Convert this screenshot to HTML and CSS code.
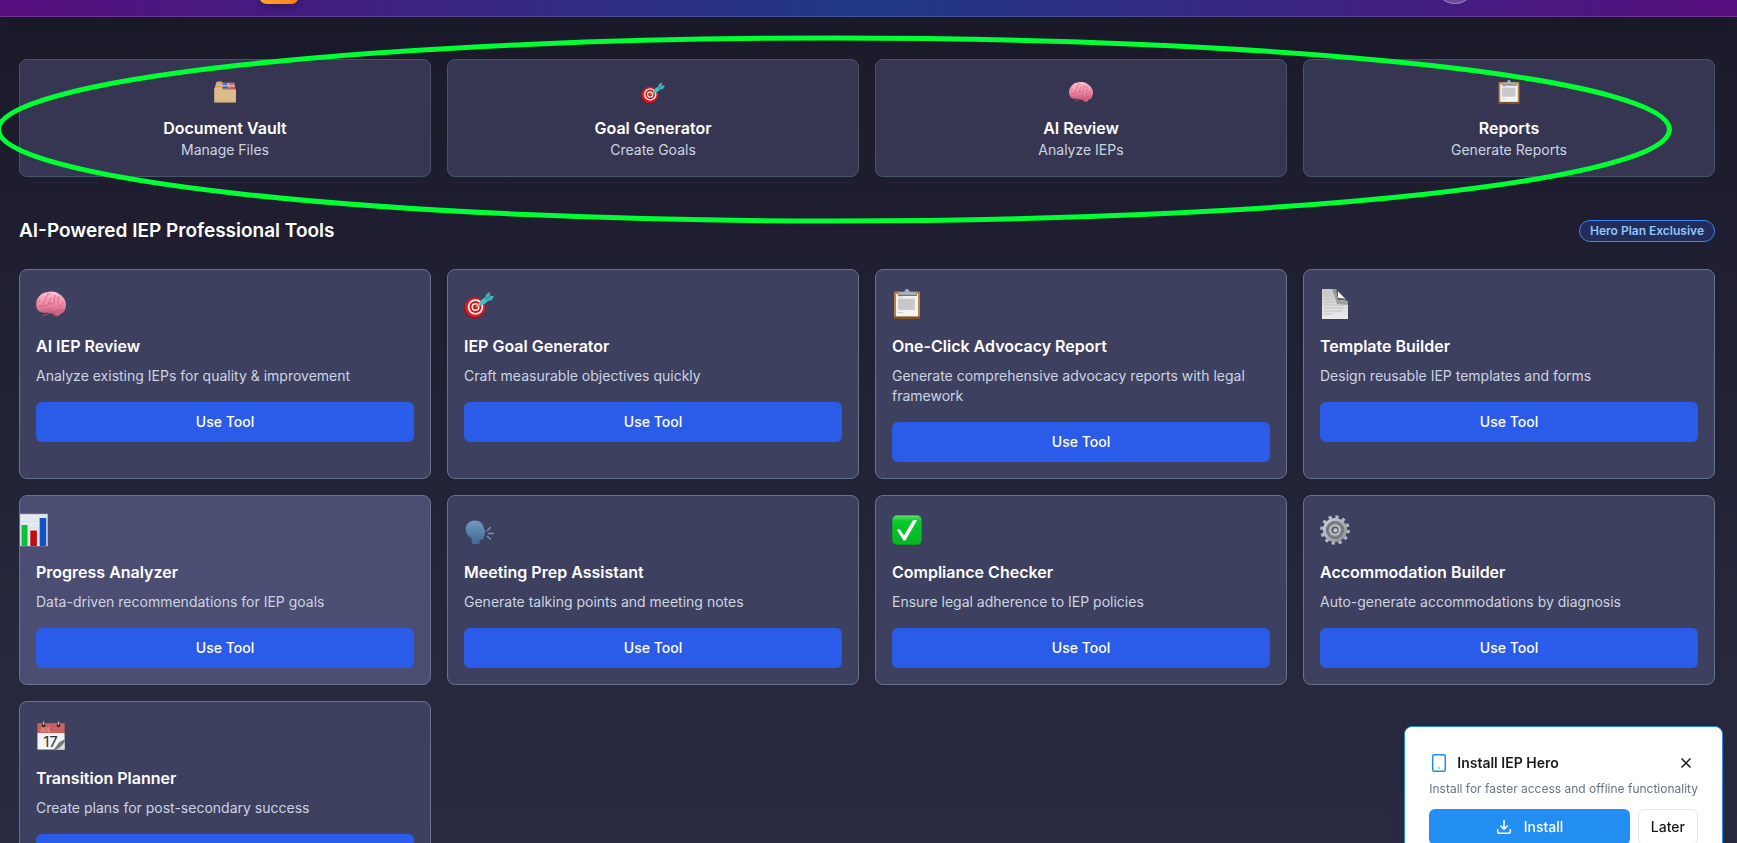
FILE: index.html
```html
<!DOCTYPE html>
<html lang="en">
<head>
<meta charset="utf-8">
<meta name="viewport" content="width=device-width, initial-scale=1">
<title>IEP Hero</title>
<link rel="stylesheet" href="styles.css">
</head>
<body>
<svg class="sprite" aria-hidden="true">
  <defs>
    <linearGradient id="g-brain" x1="0" y1="0" x2="0" y2="1"><stop offset="0" stop-color="#fbbccb"/><stop offset=".55" stop-color="#f08ba8"/><stop offset="1" stop-color="#c85a7a"/></linearGradient>
    <linearGradient id="g-head" x1="0" y1="0" x2="0" y2="1"><stop offset="0" stop-color="#7099bd"/><stop offset="1" stop-color="#416a93"/></linearGradient>
    <linearGradient id="g-check" x1="0" y1="0" x2="0" y2="1"><stop offset="0" stop-color="#5fe070"/><stop offset=".2" stop-color="#06c92c"/><stop offset="1" stop-color="#06b526"/></linearGradient>
    <linearGradient id="g-gear" x1="0" y1="0" x2="1" y2="1"><stop offset="0" stop-color="#c9cdd3"/><stop offset="1" stop-color="#8e9297"/></linearGradient>
    <linearGradient id="g-paper" x1="0" y1="0" x2="0" y2="1"><stop offset="0" stop-color="#c9c9c9"/><stop offset="1" stop-color="#ececec"/></linearGradient>
  </defs>
  <symbol id="brain" viewBox="0 0 30 30">
    <path d="M15 21c1 3 2.500 6.500 5 6.500 3 0 5-1.500 4.500-5z" fill="#b04c62"/>
    <path d="M1 20C-.5 16 0 11.500 2 9c2-3.500 5.500-5.800 9-5.800 4-1.200 9-.6 12 1.800 4 2 6.500 6 7 10 .3 4-1.500 8-4 9.500-2 1-4 .2-6-.5-3 .8-6 .8-8.500-.5C8 24 3 24 1 20z" fill="url(#g-brain)"/>
    <path d="M2 13c2-3 4-3 5-6m0 8c0-3 3-3 3-6s1-3 3-4m0 10c-1-3 2-4 2-6m3 5c0-3 1-4 1-8m3 8c1-2 0-4 0-6m5 6c-1 2-3 3-5 3m5 3c-2 2-5 0-7 2s-5 0-7 2-4 1-6 3M3 17c3-1 6 1 8-1s5-1 7-1m-8 6c2-2 4 0 6-2" fill="none" stroke="#cc5c80" stroke-width=".8" stroke-linecap="round"/>
    <path d="M5 10c1-2 3-4 5-4m7-1c2-.500 3 0 4 1" fill="none" stroke="#ffdbe4" stroke-width="1" stroke-linecap="round"/>
    <path d="M19 24.500h5M19.500 26h4" stroke="#e0899a" stroke-width=".6"/>
  </symbol>
  <symbol id="target" viewBox="0 0 30 30">
    <ellipse cx="10.500" cy="19.500" rx="10.500" ry="10" fill="#8e1013"/>
    <ellipse cx="11" cy="18.500" rx="10.300" ry="10" fill="#d91a1e"/>
    <ellipse cx="11.500" cy="18" rx="7.800" ry="7.800" fill="#f6eeee"/>
    <ellipse cx="11.500" cy="18" rx="6" ry="6" fill="#cf181c"/>
    <ellipse cx="11.500" cy="18" rx="4" ry="4" fill="#f6eeee"/>
    <ellipse cx="11.500" cy="18" rx="2.500" ry="2.500" fill="#cf181c"/>
    <path d="M12 18l5-4" stroke="#d9a441" stroke-width="1.800"/>
    <path d="M15 14.500c.5-2.500 4-5 7-6.500l2.500 3c-2 3-5 5-8.500 5.500z" fill="#3cc3cb"/>
    <path d="M21 9.500L22.500 5 26 3l-.2 3.500 4.200.7-2.500 4-4.500.8z" fill="#43b3bb"/>
    <path d="M21 11l5.500-4.500" stroke="#1b6c78" stroke-width=".8"/>
  </symbol>
  <symbol id="clipboard" viewBox="0 0 30 30">
    <rect x="2" y="2.500" width="26" height="27.500" rx="1.200" fill="#b5843f"/>
    <path d="M2 27.500h26V29a1 1 0 0 1-1 1H3a1 1 0 0 1-1-1z" fill="#7c5226"/>
    <rect x="4" y="5" width="22" height="22.300" fill="#f3f3f3"/>
    <rect x="6" y="9.500" width="17" height="11.500" rx="1" fill="#cbcbcb"/>
    <path d="M6 8h5M6 23.500h5M7 12h13M7 15h15M7 18h12" stroke="#bcbcbc" stroke-width=".7"/>
    <path d="M6 5.500l1-2.500h5.500c.3-1.800 1-3 2.500-3s2.200 1.200 2.500 3H24l1 2.500z" fill="#a9b1bb"/>
    <path d="M6 5.500h19v1.500H6z" fill="#7b7670"/>
  </symbol>
  <symbol id="page" viewBox="0 0 30 30">
    <path d="M2 0h14l12 13v17H2z" fill="url(#g-paper)"/>
    <path d="M4 4h7M4 7h9M4 10h9M4 13h10M4 16h20M4 19h20M4 22h18M4 25h8" stroke="#bdbdbd" stroke-width=".9"/>
    <path d="M12 0h4l2 10 10 3v3l-11-1z" fill="#6f6f6f" opacity=".55"/>
    <path d="M16 0l12 13c-3-2-6-2.500-10-2z" fill="#555"/>
    <path d="M18 2.500L25.500 10c-2.500-1-5-1.200-7.500-1z" fill="#f5f5f5"/>
  </symbol>
  <symbol id="chart" viewBox="0 0 30 30">
    <path d="M2 0h26v30H2z" fill="#b8c2ce"/>
    <path d="M3 1h24v28.500H3z" fill="#e3eaf2"/>
    <path d="M3 7h24M3 13h24M3 19h24M3 25h24" stroke="#cdd8e4" stroke-width=".6"/>
    <path d="M4 10.500h5.500v19H4z" fill="#0cc03a"/>
    <path d="M12 15.500h6v14h-6z" fill="#c40d10"/>
    <path d="M20.500 4h6v25.500h-6z" fill="#1054c2"/>
  </symbol>
  <symbol id="speak" viewBox="0 0 30 30">
    <path d="M10.500 5.500c5.500 0 9 3.500 9.300 7.500l2 4.500-1.500.8.3 2-1 1 .2 2c-.3 1.500-2.500 1.500-4 1.500L15.500 29H8l-.5-6C4 21.500 1.700 18 1.700 14c0-5 4-8.500 8.800-8.500z" fill="url(#g-head)"/>
    <path d="M23.500 15.500l3-3M24.500 18.500h5M23.500 21.500l3 2.500" stroke="#6f94b8" stroke-width="1.500" stroke-linecap="round"/>
  </symbol>
  <symbol id="check" viewBox="0 0 30 30">
    <rect width="30" height="30" rx="5" fill="#089a22"/>
    <rect x=".7" y=".5" width="28.600" height="28.500" rx="4.500" fill="url(#g-check)"/>
    <path d="M5 15c1-1 3-.8 3.700.5l3.300 5L20.500 6c.8-1 3-1.200 4.500-.8L13.500 25.500h-2z" fill="#fff"/>
  </symbol>
  <symbol id="gear" viewBox="0 0 30 30">
    <circle cx="15" cy="15" r="13" fill="none" stroke="#b4b8be" stroke-width="3.600" stroke-dasharray="3.200 3.607"/>
    <circle cx="15" cy="15" r="10.500" fill="none" stroke="url(#g-gear)" stroke-width="3.200"/>
    <circle cx="15" cy="15" r="9" fill="#85888c"/>
    <circle cx="15" cy="15" r="7.600" fill="none" stroke="#6d7074" stroke-width="1"/>
    <circle cx="15" cy="15" r="5.600" fill="#c7cbd0"/>
    <circle cx="15" cy="15" r="3.800" fill="#5d6064"/>
    <circle cx="15.400" cy="15.200" r="2" fill="#c6cad0"/>
  </symbol>
  <symbol id="dividers" viewBox="0 0 30 30">
    <path d="M4 3.500l1.500-1.500h5L12 3.500h14.500l1.500 7H2z" fill="#c9b9a9"/>
    <path d="M5 5l1.500-2.500h4L12 5z" fill="#f2a04a"/>
    <path d="M12 4h6v2h-6zM12 8h7v2h-7z" fill="#3f50e0"/>
    <path d="M20 4h6v2h-6zM20.500 8.500h7v2.500h-7z" fill="#ee4a45"/>
    <path d="M4 7.500h7v2H4z" fill="#e79a3f"/>
    <path d="M1.500 11l1-1.500h8l2 2H28l.7.7V28H1.500z" fill="#dfba8c"/>
    <path d="M1.500 27.500h27.200" stroke="#c49c6b" stroke-width=".8"/>
  </symbol>
</svg>

<header class="topbar">
  <div class="topbar-inner">
    <span class="logo"></span>
    <span class="avatar"></span>
  </div>
</header>

<main class="page">
  <nav class="grid" aria-label="Quick actions">
    <a class="quick" href="#vault"><svg class="emoji-sm"><use href="#dividers"/></svg><span class="name">Document Vault</span><span class="hint">Manage Files</span></a>
    <a class="quick" href="#goals"><svg class="emoji-sm"><use href="#target"/></svg><span class="name">Goal Generator</span><span class="hint">Create Goals</span></a>
    <a class="quick" href="#review"><svg class="emoji-sm"><use href="#brain"/></svg><span class="name">AI Review</span><span class="hint">Analyze IEPs</span></a>
    <a class="quick" href="#reports"><svg class="emoji-sm"><use href="#clipboard"/></svg><span class="name">Reports</span><span class="hint">Generate Reports</span></a>
  </nav>

  <section class="tools">
    <div class="section-head">
      <h2>AI-Powered IEP Professional Tools</h2>
      <span class="badge">Hero Plan Exclusive</span>
    </div>
    <div class="grid">
      <article class="tool"><div class="icon"><svg class="emoji"><use href="#brain"/></svg></div><h3>AI IEP Review</h3><p>Analyze existing IEPs for quality &amp; improvement</p><button type="button" class="use">Use Tool</button></article>
      <article class="tool"><div class="icon"><svg class="emoji"><use href="#target"/></svg></div><h3>IEP Goal Generator</h3><p>Craft measurable objectives quickly</p><button type="button" class="use">Use Tool</button></article>
      <article class="tool"><div class="icon"><svg class="emoji"><use href="#clipboard"/></svg></div><h3>One-Click Advocacy Report</h3><p>Generate comprehensive advocacy reports with legal framework</p><button type="button" class="use">Use Tool</button></article>
      <article class="tool"><div class="icon"><svg class="emoji"><use href="#page"/></svg></div><h3>Template Builder</h3><p>Design reusable IEP templates and forms</p><button type="button" class="use">Use Tool</button></article>
      <article class="tool is-active"><div class="icon"><svg class="emoji"><use href="#chart"/></svg></div><h3>Progress Analyzer</h3><p>Data-driven recommendations for IEP goals</p><button type="button" class="use">Use Tool</button></article>
      <article class="tool"><div class="icon"><svg class="emoji"><use href="#speak"/></svg></div><h3>Meeting Prep Assistant</h3><p>Generate talking points and meeting notes</p><button type="button" class="use">Use Tool</button></article>
      <article class="tool"><div class="icon"><svg class="emoji"><use href="#check"/></svg></div><h3>Compliance Checker</h3><p>Ensure legal adherence to IEP policies</p><button type="button" class="use">Use Tool</button></article>
      <article class="tool"><div class="icon"><svg class="emoji"><use href="#gear"/></svg></div><h3>Accommodation Builder</h3><p>Auto-generate accommodations by diagnosis</p><button type="button" class="use">Use Tool</button></article>
      <article class="tool">
        <div class="icon">
          <svg class="emoji" viewBox="0 0 30 30">
            <path d="M1 2h28v27H1z" fill="#5c5557"/>
            <path d="M1.500 2.300h27V12h-27z" fill="#c8605f"/>
            <path d="M1.500 12h27v16.500h-27z" fill="#f4f4f4"/>
            <text x="3.500" y="10.500" class="cal-month">JUL</text>
            <text x="14.500" y="25.500" text-anchor="middle" class="cal-day">17</text>
            <path d="M28.500 18.500c-2 1-5 2-7 5-1 1.500-2.500 4-4.500 5h4c4-1 6-4.500 7.500-7z" fill="#777"/>
            <path d="M28.500 21v7.500H20c4-1.500 6-4 8.500-7.500z" fill="#dcdcdc"/>
            <circle cx="7.500" cy="4.500" r="1.700" fill="#281c1c"/><circle cx="22.500" cy="4.500" r="1.700" fill="#281c1c"/>
            <path d="M7.500.3v4M22.500.3v4" stroke="#b9b9b9" stroke-width="1"/>
          </svg>
        </div>
        <h3>Transition Planner</h3><p>Create plans for post-secondary success</p><button type="button" class="use">Use Tool</button>
      </article>
    </div>
  </section>
</main>

<svg class="annotation" viewBox="0 0 1737 240" preserveAspectRatio="none" aria-hidden="true">
  <ellipse cx="834" cy="129.500" rx="835.500" ry="91.500"/>
</svg>

<aside class="install" aria-label="Install IEP Hero">
  <div class="install-head">
    <svg class="phone" viewBox="0 0 20 20" aria-hidden="true"><rect x="3.700" y="1.700" width="12.600" height="16.600" rx="1.600"/><path d="M10 15h.01"/></svg>
    <h3>Install IEP Hero</h3>
    <button type="button" class="close" aria-label="Close"><svg viewBox="0 0 16 16"><path d="M3.500 3.500l9 9M12.500 3.500l-9 9"/></svg></button>
  </div>
  <p>Install for faster access and offline functionality</p>
  <div class="install-actions">
    <button type="button" class="primary"><svg viewBox="0 0 16 16" aria-hidden="true"><path d="M8 1.500v8.500M4.700 7L8 10.300 11.300 7M1.700 10.500v2.300a1.500 1.500 0 0 0 1.500 1.500h9.600a1.500 1.500 0 0 0 1.500-1.500v-2.300"/></svg>Install</button>
    <button type="button" class="secondary">Later</button>
  </div>
</aside>
</body>
</html>
```

FILE: styles.css
```css
* {
  box-sizing: border-box;
}

html,
body {
  height: 100%;
  overflow: hidden;
}

body {
  margin: 0;
  background: linear-gradient(#1a1a2a, #2a2a42);
  color: #fff;
  font-family: Inter, "Liberation Sans", sans-serif;
  font-size: 14px;
  line-height: 20px;
}

h2,
h3,
p {
  margin: 0;
}

button {
  font: inherit;
  cursor: pointer;
}

.sprite {
  position: absolute;
  width: 0;
  height: 0;
}

.cal-month {
  font-size: 6px;
  font-weight: 600;
  fill: #e3a3a2;
}

.cal-day {
  font-size: 15px;
  fill: #333;
}

/* Top bar */
.topbar {
  height: 17px;
  overflow: hidden;
  border-bottom: 1px solid rgba(255, 255, 255, 0.15);
  background: linear-gradient(90deg, #570f7e, #1e3885 50%, #570f7e);
  box-shadow: 0 10px 30px rgba(0, 0, 0, 0.15);
  padding-right: 3px;
}

.topbar-inner {
  display: flex;
  align-items: flex-end;
  justify-content: space-between;
  max-width: 1216px;
  height: 4px;
  margin: 0 auto;
}

.logo {
  width: 40px;
  height: 40px;
  border-radius: 8px;
  background: linear-gradient(90deg, #fba82c, #fb7d20);
  box-shadow: 0 4px 10px rgba(0, 0, 0, 0.25);
}

.avatar {
  width: 40px;
  height: 40px;
  border: 1px solid rgba(255, 255, 255, 0.3);
  border-radius: 50%;
  background: rgba(255, 255, 255, 0.2);
}

/* Page */
.page {
  padding: 42px 22px 42px 19px;
}

.grid {
  display: grid;
  grid-template-columns: repeat(4, 1fr);
  gap: 16px;
}

.quick {
  display: flex;
  flex-direction: column;
  align-items: center;
  padding: 16px;
  border: 1px solid #475569;
  border-radius: 8px;
  background: #363652;
  color: inherit;
  text-decoration: none;
}

.emoji-sm {
  width: 24px;
  height: 24px;
  margin: 4px 0 12px;
}

.name {
  font-size: 16px;
  font-weight: 600;
  line-height: 24px;
}

.hint {
  color: #cbd5e1;
}

.tools {
  margin-top: 40px;
}

.section-head {
  display: flex;
  align-items: center;
  justify-content: space-between;
  margin-bottom: 24px;
}

.section-head h2 {
  font-size: 19px;
  font-weight: 600;
  line-height: 28px;
}

.badge {
  padding: 2px 10px;
  border: 1px solid #3b82f6;
  border-radius: 11px;
  background: #222d5a;
  color: #93c5fd;
  font-size: 12px;
  font-weight: 600;
  line-height: 16px;
}

.tool {
  overflow: hidden;
  padding: 16px;
  border: 1px solid #64748b;
  border-radius: 8px;
  background: #3e405f;
}

.tool.is-active {
  background: #4c4d73;
}

.icon {
  display: flex;
  align-items: center;
  height: 36px;
  margin-bottom: 12px;
}

.is-active .icon {
  transform: scale(1.1);
}

.emoji {
  width: 30px;
  height: 30px;
}

.tool h3 {
  margin-bottom: 8px;
  font-size: 16px;
  font-weight: 600;
  line-height: 24px;
}

.tool p {
  margin-bottom: 16px;
  color: #cbd5e1;
}

.use {
  display: block;
  width: 100%;
  height: 40px;
  border: 0;
  border-radius: 6px;
  background: #2a5ce9;
  color: #fff;
  font-weight: 500;
}

/* Hand-drawn highlight over the quick actions */
.annotation {
  position: absolute;
  top: 0;
  left: 0;
  width: 100%;
  height: 240px;
  fill: none;
  stroke: #00ff33;
  stroke-width: 5px;
  pointer-events: none;
}

/* Install prompt */
.install {
  position: fixed;
  right: 14px;
  bottom: -27px;
  padding: 24px;
  border: 1px solid #228be6;
  border-radius: 8px;
  background: #fff;
  color: #1a1b1e;
  box-shadow: 0 10px 15px rgba(0, 0, 0, 0.1);
}

.install-head {
  display: flex;
  align-items: center;
  gap: 8px;
  height: 24px;
  margin-bottom: 6px;
}

.install-head h3 {
  flex: 1;
  font-size: 14px;
  font-weight: 600;
  line-height: 20px;
}

.phone {
  width: 20px;
  height: 20px;
  fill: none;
  stroke: #228be6;
  stroke-width: 1.5;
  stroke-linecap: round;
}

.close {
  display: grid;
  place-items: center;
  width: 24px;
  height: 24px;
  padding: 0;
  border: 0;
  background: none;
}

.close svg {
  width: 16px;
  height: 16px;
  fill: none;
  stroke: #1a1b1e;
  stroke-width: 1.5;
}

.install p {
  margin-bottom: 12px;
  color: #64748b;
  font-size: 12px;
  line-height: 16px;
}

.install-actions {
  display: flex;
  gap: 8px;
}

.primary,
.secondary {
  height: 36px;
  border-radius: 6px;
  font-weight: 500;
}

.primary {
  display: flex;
  flex: 1;
  align-items: center;
  justify-content: center;
  gap: 12px;
  border: 0;
  background: #228ef2;
  color: #fff;
}

.primary svg {
  width: 16px;
  height: 16px;
  fill: none;
  stroke: #fff;
  stroke-width: 1.5;
  stroke-linecap: round;
  stroke-linejoin: round;
}

.secondary {
  padding: 0 12px;
  border: 1px solid #e2e8f0;
  background: #fff;
  color: #1a1b1e;
}
```
